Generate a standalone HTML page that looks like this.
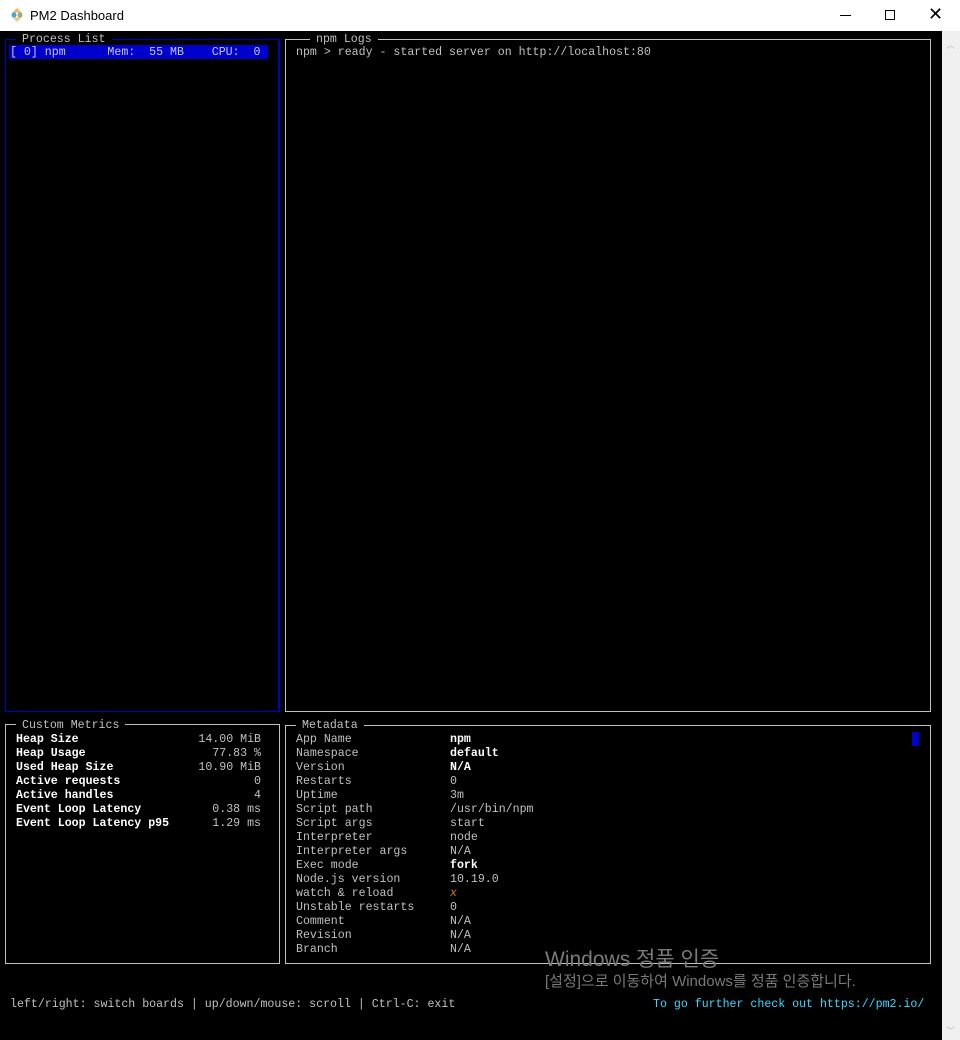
<!DOCTYPE html>
<html><head><meta charset="utf-8"><style>
*{margin:0;padding:0;box-sizing:border-box}
html,body{width:960px;height:1040px;overflow:hidden;background:#000}
.tb{position:absolute;left:0;top:0;width:960px;height:31px;background:#fff;font-family:"Liberation Sans",sans-serif;font-size:13px;color:#000}
.term{position:absolute;left:0;top:31px;width:942px;height:1009px;background:#000}
.sb{position:absolute;left:942px;top:31px;width:18px;height:1009px;background:#f0f0f0}
.m{position:absolute;font-family:"Liberation Mono",monospace;font-size:11.6px;line-height:14px;white-space:pre;color:#c0c0c0}
.b{font-weight:bold;color:#fff}
.box{position:absolute;border:1px solid #c0c0c0}
.t{position:absolute;background:#000;padding:0 6px}
</style></head><body>
<div class="tb">
<svg style="position:absolute;left:9px;top:7px" width="16" height="16" viewBox="0 0 16 16">
<path d="M8 1 L13 6 L11 8 L8 5 L5 8 L3 6Z" fill="#f4b860"/>
<path d="M8 15 L13 10 L11 8 L8 11 L5 8 L3 10Z" fill="#f4b860" opacity=".8"/>
<circle cx="5" cy="8" r="2.5" fill="#3aa8e0"/><circle cx="11" cy="8" r="2.5" fill="#8fb08a"/>
</svg>
<div style="position:absolute;left:30px;top:8px">PM2 Dashboard</div>
<div style="position:absolute;left:840px;top:15px;width:11px;height:1px;background:#000"></div>
<div style="position:absolute;left:885px;top:10px;width:10px;height:10px;border:1px solid #000"></div>
<div style="position:absolute;left:928px;top:4px;font-size:18px;font-family:'DejaVu Sans',sans-serif;font-weight:200">✕</div>
</div>
<div class="term"></div>
<div class="sb">
<div style="position:absolute;left:4px;top:7px;color:#bbb;font-size:9px;font-family:'DejaVu Sans'">︿</div>
<div style="position:absolute;left:4px;top:993px;color:#bbb;font-size:9px;font-family:'DejaVu Sans'">﹀</div>
</div>

<div class="box" style="left:5px;top:39px;width:275px;height:673px;border-color:#0000c8;border-width:1px 2px 1px 1px"></div>
<div class="m t" style="left:16px;top:33px">Process List</div>
<div style="position:absolute;left:9px;top:45px;width:259px;height:14px;background:#0000cd"></div>
<div class="m" style="left:10px;top:46px;color:#c8c8ff">[ 0] npm      Mem:  55 MB    CPU:  0</div>

<div class="box" style="left:285px;top:39px;width:646px;height:673px"></div>
<div class="m t" style="left:310px;top:33px">npm Logs</div>
<div class="m" style="left:296px;top:46px">npm &gt; ready - started server on http://localhost:80</div>

<div class="box" style="left:5px;top:724px;width:275px;height:240px"></div>
<div class="m t" style="left:16px;top:719px">Custom Metrics</div>
<div class="m b" style="left:16px;top:733px">Heap Size
Heap Usage
Used Heap Size
Active requests
Active handles
Event Loop Latency
Event Loop Latency p95</div>
<div class="m" style="left:150px;top:733px;width:111px;text-align:right">14.00 MiB
77.83 %
10.90 MiB
0
4
0.38 ms
1.29 ms</div>

<div class="box" style="left:285px;top:725px;width:646px;height:239px"></div>
<div class="m t" style="left:296px;top:719px">Metadata</div>
<div class="m" style="left:296px;top:733px">App Name
Namespace
Version
Restarts
Uptime
Script path
Script args
Interpreter
Interpreter args
Exec mode
Node.js version
watch &amp; reload
Unstable restarts
Comment
Revision
Branch</div>
<div class="m" style="left:450px;top:733px"><span class="b">npm</span>
<span class="b">default</span>
<span class="b">N/A</span>
0
3m
/usr/bin/npm
start
node
N/A
<span class="b">fork</span>
10.19.0
<span style="color:#d87a20;font-style:italic">x</span>
0
N/A
N/A
N/A</div>
<div style="position:absolute;left:912px;top:732px;width:7px;height:14px;background:#0000cd"></div>

<div style="position:absolute;left:545px;top:943px;font-family:'Liberation Sans','Noto Sans CJK KR',sans-serif;font-size:21px;color:#7a7a7a;white-space:nowrap">Windows 정품 인증</div>
<div style="position:absolute;left:545px;top:970px;font-family:'Liberation Sans','Noto Sans CJK KR',sans-serif;font-size:15px;color:#7a7a7a;white-space:nowrap">[설정]으로 이동하여 Windows를 정품 인증합니다.</div>

<div class="m" style="left:10px;top:998px">left/right: switch boards | up/down/mouse: scroll | Ctrl-C: exit</div>
<div class="m" style="left:653px;top:998px;color:#3ad8ff">To go further check out https://pm2.io/</div>
</body></html>
